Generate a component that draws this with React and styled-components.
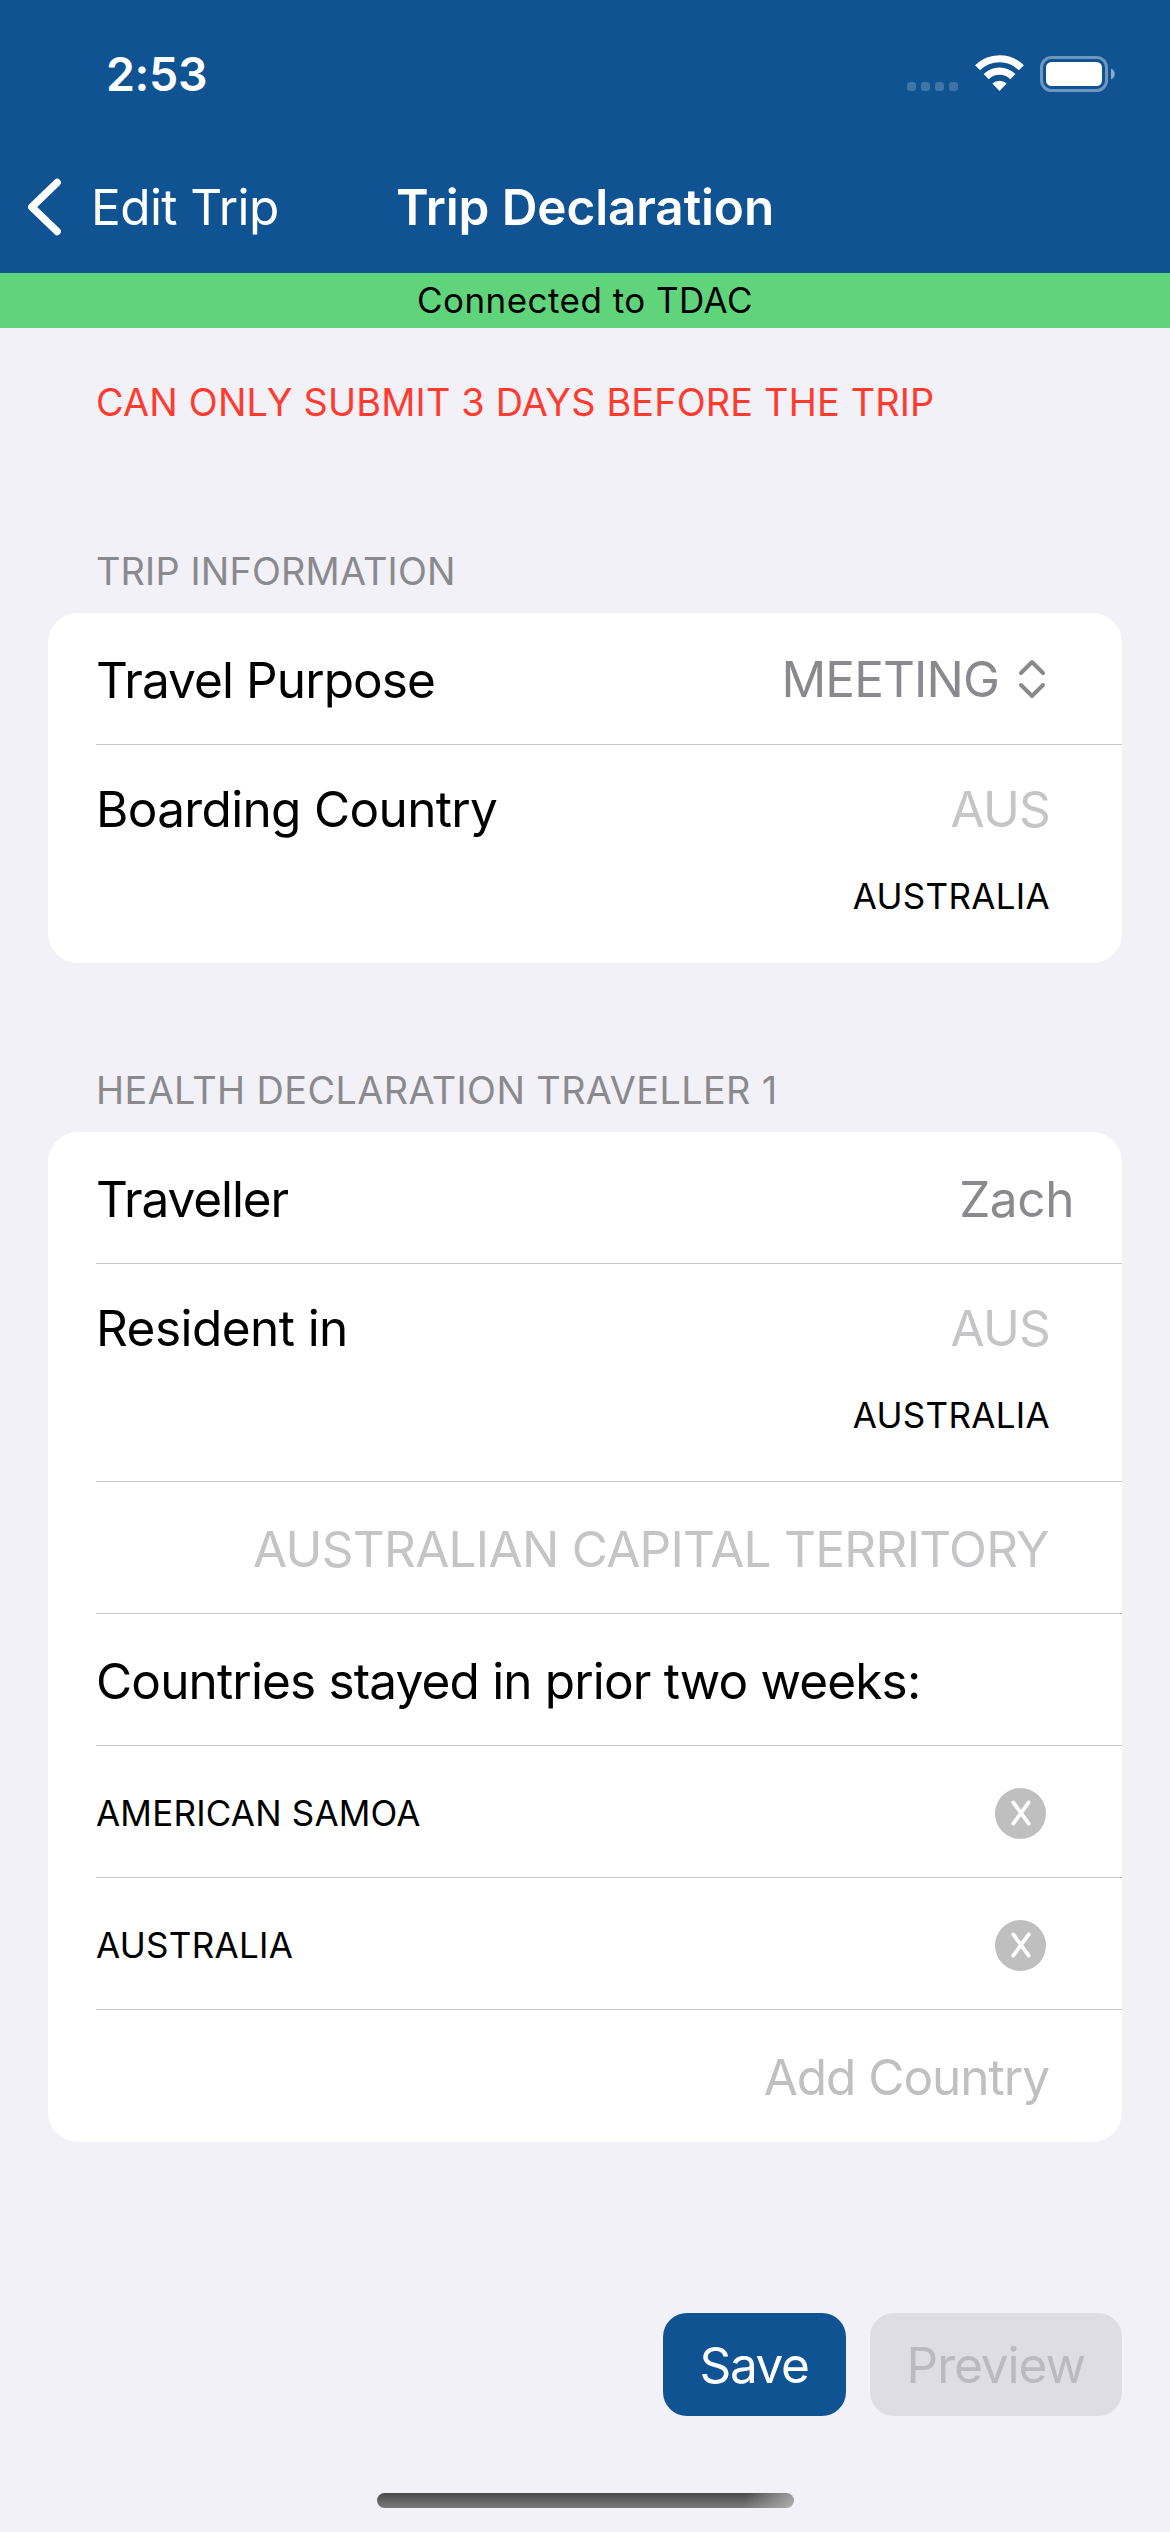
import styled, { createGlobalStyle } from "styled-components"

const App = () => {
  return (
    <>
      <GlobalStyle />
      <Screen>
        <Header>
          <StatusBar>
            <Time>2:53</Time>
            <StatusIcons>
              <SignalDots />
              <Wifi />
              <Battery />
            </StatusIcons>
          </StatusBar>
          <NavBar>
            <BackButton>
              <BackArrow />
              Edit Trip
            </BackButton>
            <Title>Trip Declaration</Title>
          </NavBar>
        </Header>

        <Banner>Connected to TDAC</Banner>

        <Content>
          <SectionLabel $warning $track={0.19}>CAN ONLY SUBMIT 3 DAYS BEFORE THE TRIP</SectionLabel>

          <Section $gap={119}>
            <SectionLabel $track={0.18}>TRIP INFORMATION</SectionLabel>
            <Card>
              <Row>
                <Label $track={-0.91}>Travel Purpose</Label>
                <Picker>
                  MEETING
                  <UpDown />
                </Picker>
              </Row>
              <CountryRow label="Boarding Country" track={-0.66} />
            </Card>
          </Section>

          <Section $gap={102}>
            <SectionLabel $track={0.41}>HEALTH DECLARATION TRAVELLER 1</SectionLabel>
            <Card>
              <Row $right={48}>
                <Label $track={-1.1}>Traveller</Label>
                <Value $track={-0.4}>Zach</Value>
              </Row>
              <CountryRow label="Resident in" track={-0.55} />
              <Row $end>
                <Placeholder $track={-0.71}>AUSTRALIAN CAPITAL TERRITORY</Placeholder>
              </Row>
              <Row>
                <Label $track={-0.84}>Countries stayed in prior two weeks:</Label>
              </Row>
              {
                countries.map(({ id, name, track }) => (
                  <Row key={id} $right={76}>
                    <CountryName $track={track}>{name}</CountryName>
                    <RemoveButton aria-label={`Remove ${name}`}>
                      <Cross />
                    </RemoveButton>
                  </Row>
                ))
              }
              <Row $end>
                <AddCountry>Add Country</AddCountry>
              </Row>
            </Card>
          </Section>

          <Actions>
            <Button $track={-1.4}>Save</Button>
            <Button $track={-1.02} disabled>Preview</Button>
          </Actions>
        </Content>

        <HomeIndicator />
      </Screen>
    </>
  )
}

export default App


const countries = [
  { id: "1", name: "AMERICAN SAMOA", track: 0.2 },
  { id: "2", name: "AUSTRALIA", track: 0.3 },
]

const CountryRow = ({ label, track }) => (
  <TallRow>
    <CountryLine>
      <Label $track={track}>{label}</Label>
      <Placeholder $track={-0.76}>AUS</Placeholder>
    </CountryLine>
    <CountryName $track={0.3}>AUSTRALIA</CountryName>
  </TallRow>
)

/************ ICONS ************/
const SignalDots = () => (
  <svg width="52" height="10" viewBox="0 0 52 10" fill="#fff" fillOpacity="0.2">
    <rect x="0" width="9" height="9" rx="3" />
    <rect x="14" width="9" height="9" rx="3" />
    <rect x="28" width="9" height="9" rx="3" />
    <rect x="42" width="9" height="9" rx="3" />
  </svg>
)

const Wifi = () => (
  <svg width="49" height="37" viewBox="0 0 49 37" fill="none" stroke="#fff">
    <path d="M2.6 12.8 A31 31 0 0 1 46.4 12.8" strokeWidth="7.2" />
    <path d="M11.2 21.6 A18.8 18.8 0 0 1 37.8 21.6" strokeWidth="7.2" />
    <path d="M24.5 36 L17.4 28.6 A10 10 0 0 1 31.6 28.6 Z" fill="#fff" stroke="none" />
  </svg>
)

const Battery = () => (
  <svg width="75" height="36" viewBox="0 0 75 36" fill="none">
    <rect x="1.5" y="1.5" width="65" height="33" rx="10" stroke="#fff" strokeOpacity="0.4" strokeWidth="3" />
    <rect x="6" y="6" width="56" height="24" rx="5.5" fill="#fff" />
    <path d="M71 12.5 C76 14.5 76 21.5 71 23.5 Z" fill="#fff" fillOpacity="0.5" />
  </svg>
)

const BackArrow = () => (
  <svg width="34" height="58" viewBox="0 0 34 58" fill="none" stroke="#fff" strokeWidth="7.4" strokeLinecap="round" strokeLinejoin="round">
    <path d="M29.2 4.5 L3.8 29 L29.2 53.5" />
  </svg>
)

const UpDown = () => (
  <svg width="28" height="40" viewBox="0 0 28 40" fill="none" stroke="#8a8a8e" strokeWidth="4" strokeLinecap="round" strokeLinejoin="round">
    <path d="M3 14 L14 3 L25 14" />
    <path d="M3 26 L14 37 L25 26" />
  </svg>
)

const Cross = () => (
  <svg width="20" height="26" viewBox="0 0 20 26" fill="none" stroke="#fff" strokeWidth="3.8" strokeLinecap="round">
    <path d="M2.3 2.4 L17.7 23.6" />
    <path d="M17.7 2.4 L2.3 23.6" />
  </svg>
)

/************ STYLES ************/
const GlobalStyle = createGlobalStyle`
  * {
    box-sizing: border-box;
  }

  body {
    margin: 0;
    background: #f2f1f7;
    font-family: Inter, "Liberation Sans", sans-serif;
  }

  svg {
    display: block;
    flex-shrink: 0;
  }

  button {
    border: none;
    padding: 0;
    background: none;
    font: inherit;
    color: inherit;
  }
`

const Screen = styled.div`
  display: flex;
  flex-direction: column;
  align-items: stretch;
  width: 1170px;
  height: 2532px;
  background: #f2f1f7;
`

const Header = styled.header`
  height: 273px;
  background: #0f5392;
  color: #fff;
`

const StatusBar = styled.div`
  display: flex;
  justify-content: space-between;
  align-items: center;
  height: 148px;
  padding: 0 55px 0 106px;
`

const Time = styled.span`
  font-size: 46.5px;
  font-weight: 600;
  letter-spacing: -0.35px;
`

const StatusIcons = styled.div`
  display: flex;
  align-items: flex-end;
  gap: 16px;
  margin-bottom: 1px;
`

const NavBar = styled.nav`
  display: grid;
  grid-template-columns: 1fr auto 1fr;
  align-items: center;
  height: 117px;
  padding: 0 28px;
  font-size: 49.5px;
`

const BackButton = styled.button`
  display: flex;
  align-items: center;
  gap: 29px;
  letter-spacing: -0.59px;
`

const Title = styled.h1`
  margin: 0;
  font-size: 49.5px;
  font-weight: 600;
  letter-spacing: -0.12px;
`

const Banner = styled.div`
  height: 55px;
  background: #5fd47b;
  color: #000;
  font-size: 35px;
  line-height: 55px;
  letter-spacing: 0.46px;
  text-align: center;
`

const Content = styled.main`
  display: flex;
  flex-direction: column;
  padding: 49px 48px 0;
`

const SectionLabel = styled.h2`
  margin: 0;
  padding-left: 48px;
  color: ${(p) => (p.$warning ? "#ff3b30" : "#8a8a8e")};
  font-size: 37.8px;
  font-weight: 400;
  line-height: 50px;
  letter-spacing: ${(p) => p.$track}px;
`

const Section = styled.section`
  display: flex;
  flex-direction: column;
  gap: 17px;
  margin-top: ${(p) => p.$gap}px;
`

const Card = styled.div`
  padding-left: 48px;
  background: #fff;
  border-radius: 30px;
`

const Row = styled.div`
  display: flex;
  justify-content: ${(p) => (p.$end ? "flex-end" : "space-between")};
  align-items: center;
  height: 132px;
  padding: 3px ${(p) => p.$right || 73}px 0 0;
  border-bottom: 1px solid #c6c6c8;

  &:last-child {
    border-bottom-color: transparent;
  }
`

const TallRow = styled(Row)`
  flex-direction: column;
  justify-content: flex-start;
  align-items: flex-end;
  gap: 37px;
  height: 218px;
  padding: 34px 72px 0 0;
`

const CountryLine = styled.div`
  display: flex;
  justify-content: space-between;
  width: 100%;
`

const Label = styled.span`
  color: #000;
  font-size: 49.5px;
  line-height: 60px;
  letter-spacing: ${(p) => p.$track}px;
  white-space: nowrap;
`

const Value = styled(Label)`
  color: #8a8a8e;
`

const Placeholder = styled(Label)`
  color: #c5c5c7;
`

const Picker = styled.button`
  display: flex;
  align-items: center;
  gap: 19px;
  margin: 0 3px 2px 0;
  color: #8a8a8e;
  font-size: 49.5px;
  line-height: 60px;
  letter-spacing: -0.88px;
`

const CountryName = styled.span`
  font-size: 35px;
  line-height: 40px;
  letter-spacing: ${(p) => p.$track}px;
`

const RemoveButton = styled.button`
  display: flex;
  justify-content: center;
  align-items: center;
  width: 51px;
  height: 51px;
  border-radius: 50%;
  background: #bfbfbf;
`

const AddCountry = styled.button`
  color: #c0c0c0;
  font-size: 49.5px;
  line-height: 60px;
  letter-spacing: -1.01px;
`

const Actions = styled.div`
  display: flex;
  justify-content: flex-end;
  gap: 24px;
  margin-top: 171px;
`

const Button = styled.button`
  height: 103px;
  padding: 0 37px;
  border-radius: 24px;
  background: #0f5392;
  color: #fff;
  font-size: 49.5px;
  letter-spacing: ${(p) => p.$track}px;

  &:disabled {
    background: #dedde3;
    color: #bbbac0;
  }
`

const HomeIndicator = styled.div`
  width: 417px;
  height: 15px;
  margin: auto auto 24px;
  border-radius: 8px;
  background:
    linear-gradient(100deg, transparent 88%, rgba(190, 190, 190, 0.75) 100%),
    linear-gradient(#4a4a4a, #7a7a7c);
`
